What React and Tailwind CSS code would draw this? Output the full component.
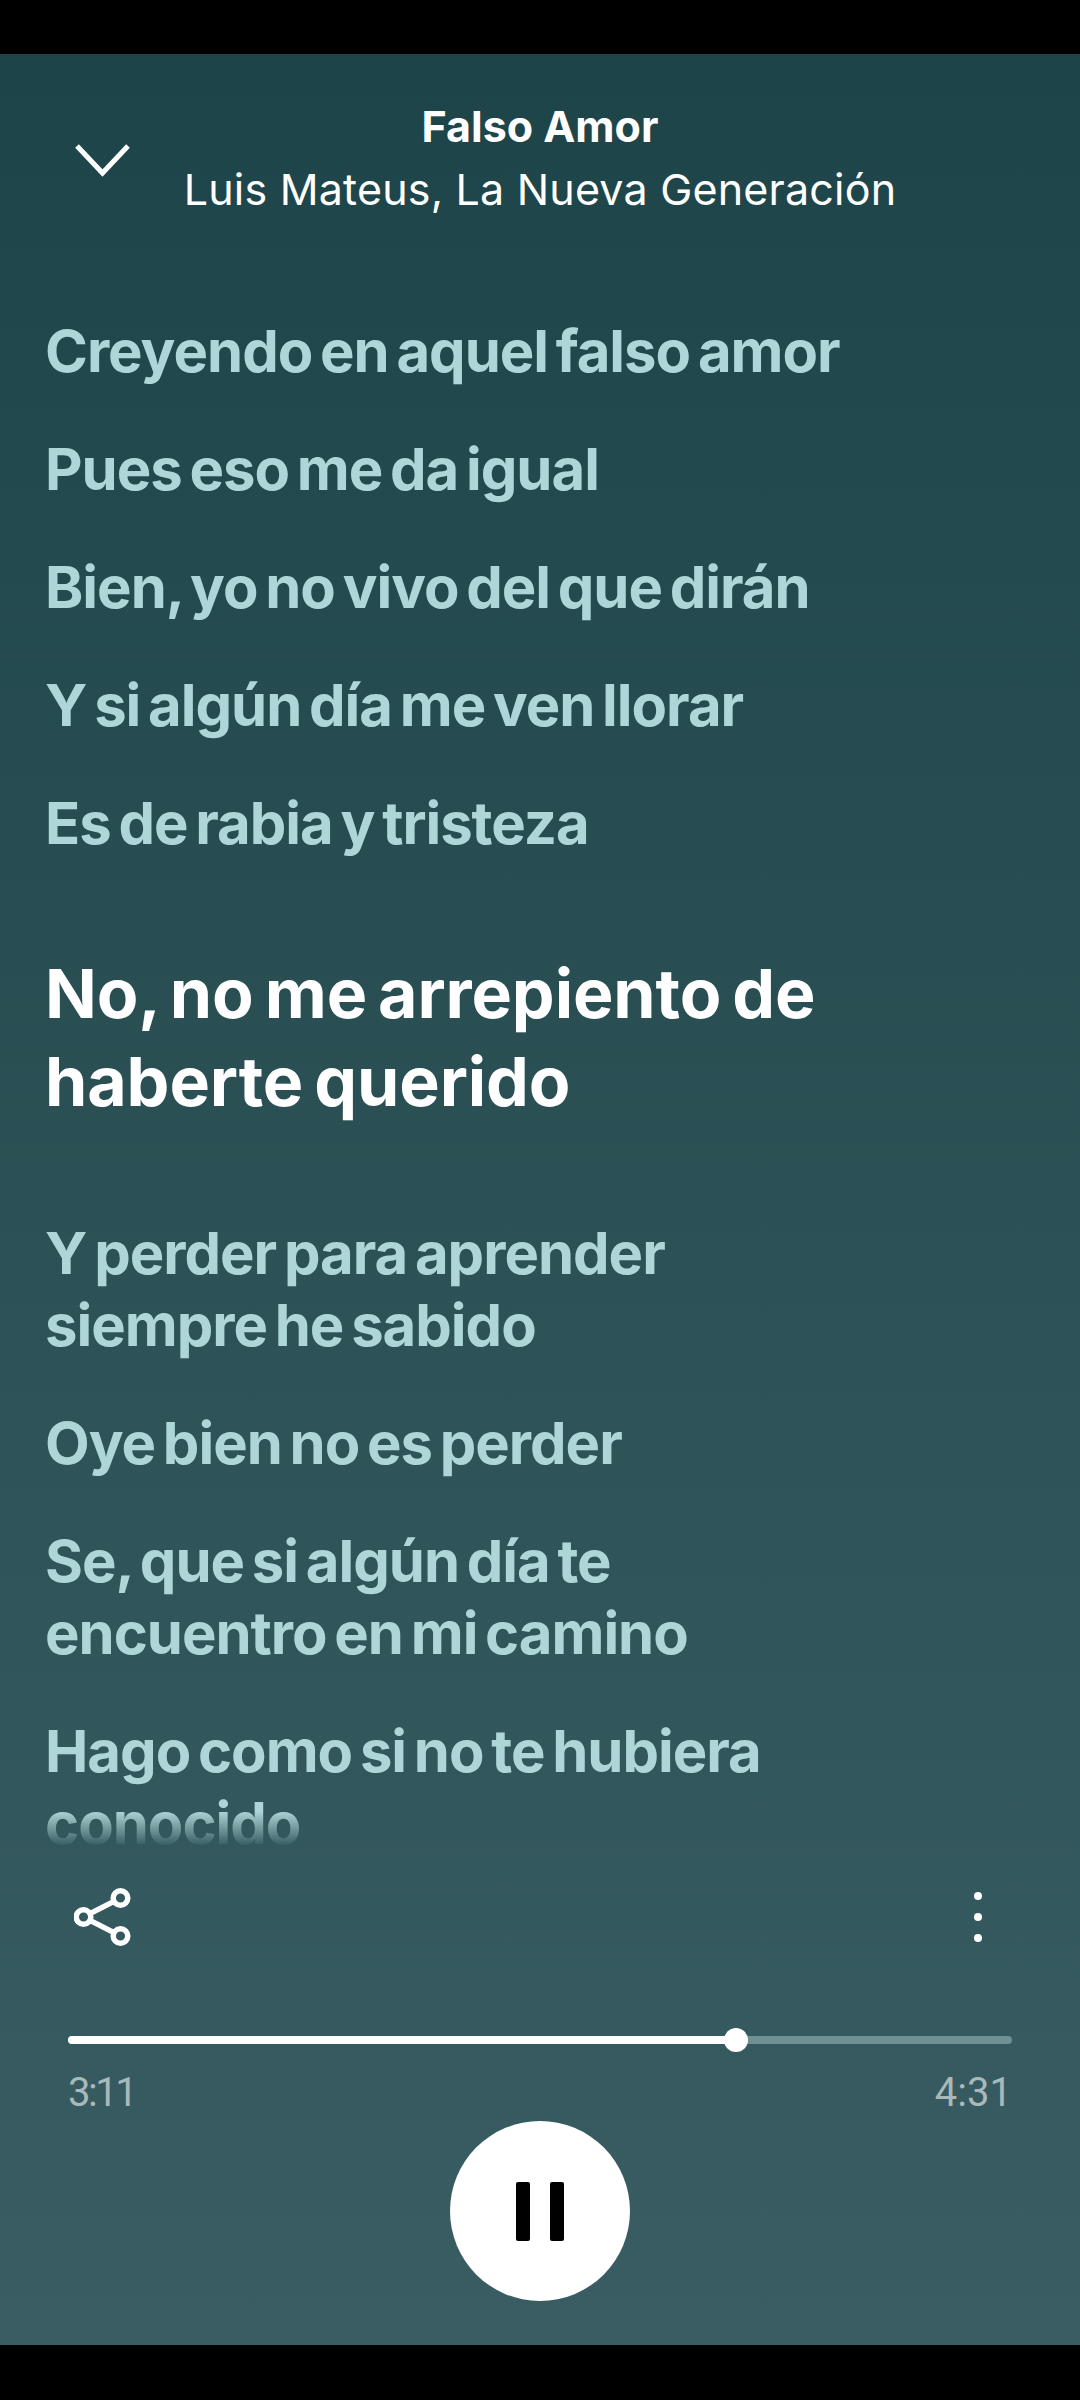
const before = [
  "Creyendo en aquel falso amor",
  "Pues eso me da igual",
  "Bien, yo no vivo del que dirán",
  "Y si algún día me ven llorar",
  "Es de rabia y tristeza",
];
const after = [
  ["Y perder para aprender", "siempre he sabido"],
  ["Oye bien no es perder"],
  ["Se, que si algún día te", "encuentro en mi camino"],
  ["Hago como si no te hubiera", "conocido"],
];
const lyric = "text-[58px] leading-[72px] font-bold tracking-[-1px] [word-spacing:-5px] text-[#aed6d9] whitespace-nowrap";
const active = "text-[68px] leading-[88px] font-bold tracking-[-0.1px] [word-spacing:-5px] text-white whitespace-nowrap";

export default function App() {
  return (
    <div className="w-[1080px] h-[2400px] bg-black flex flex-col pt-[54px] pb-[55px] font-['Inter',sans-serif] overflow-hidden">
      <div className="flex-1 min-h-0 flex flex-col bg-linear-to-b from-[#1d4549] to-[#395d62]">
        <header className="relative h-[166px] shrink-0 flex flex-col items-center pt-[49px] text-white">
          <svg className="absolute left-[74px] top-[89px]" width="57" height="34" viewBox="0 0 57 34" fill="none" stroke="white" strokeWidth="5">
            <path d="M3 3 L28.5 30 L54 3" />
          </svg>
          <div className="text-[43px] leading-[46px] font-bold">Falso Amor</div>
          <div className="text-[43px] leading-[52px] mt-[14px] tracking-[0.2px]">Luis Mateus, La Nueva Generación</div>
        </header>
        <div className="flex-1 min-h-0 overflow-hidden pl-[45px] pt-[95px] flex flex-col gap-[46px] [mask-image:linear-gradient(to_bottom,black_calc(100%-36px),transparent_100%)]">
          {before.map((l) => (
            <div key={l} className={lyric}>{l}</div>
          ))}
          <div className={`${active} mt-[44px] mb-[46px]`}>
            <div>No, no me arrepiento de</div>
            <div>haberte querido</div>
          </div>
          {after.map((ls) => (
            <div key={ls[0]} className={lyric}>
              {ls.map((l) => (
                <div key={l}>{l}</div>
              ))}
            </div>
          ))}
        </div>
        <footer className="shrink-0 h-[498px] px-[68px] pt-[40px] flex flex-col">
          <div className="flex items-center justify-between h-[60px] pl-[6px] pr-[30px]">
            <svg width="58" height="60" viewBox="0 0 58 60" fill="none" stroke="white" strokeWidth="5.5">
              <circle cx="9.5" cy="30" r="7.3" />
              <circle cx="46.5" cy="11" r="7.3" />
              <circle cx="46.5" cy="49" r="7.3" />
              <path d="M16 26.6 L40 14.4 M16 33.4 L40 45.6" />
            </svg>
            <div className="flex flex-col gap-[13px]">
              <div className="w-[8px] h-[8px] rounded-full bg-white" />
              <div className="w-[8px] h-[8px] rounded-full bg-white" />
              <div className="w-[8px] h-[8px] rounded-full bg-white" />
            </div>
          </div>
          <div className="relative h-[8px] mt-[89px] rounded-full bg-[#6f9090]">
            <div className="h-full w-[668px] rounded-full bg-white" />
            <div className="absolute left-[656px] top-[-8px] w-[24px] h-[24px] rounded-full bg-white" />
          </div>
          <div className="flex justify-between mt-[27px] font-['Roboto',sans-serif] font-normal text-[40px] leading-[44px] text-[#a9b8ba]">
            <span className="tracking-[-2.5px]">3:11</span>
            <span>4:31</span>
          </div>
          <div className="self-center mt-[6px] w-[180px] h-[180px] rounded-full bg-white flex items-center justify-center gap-[20px]">
            <div className="w-[14px] h-[59px] rounded-[2px] bg-black" />
            <div className="w-[14px] h-[59px] rounded-[2px] bg-black" />
          </div>
        </footer>
      </div>
    </div>
  );
}
